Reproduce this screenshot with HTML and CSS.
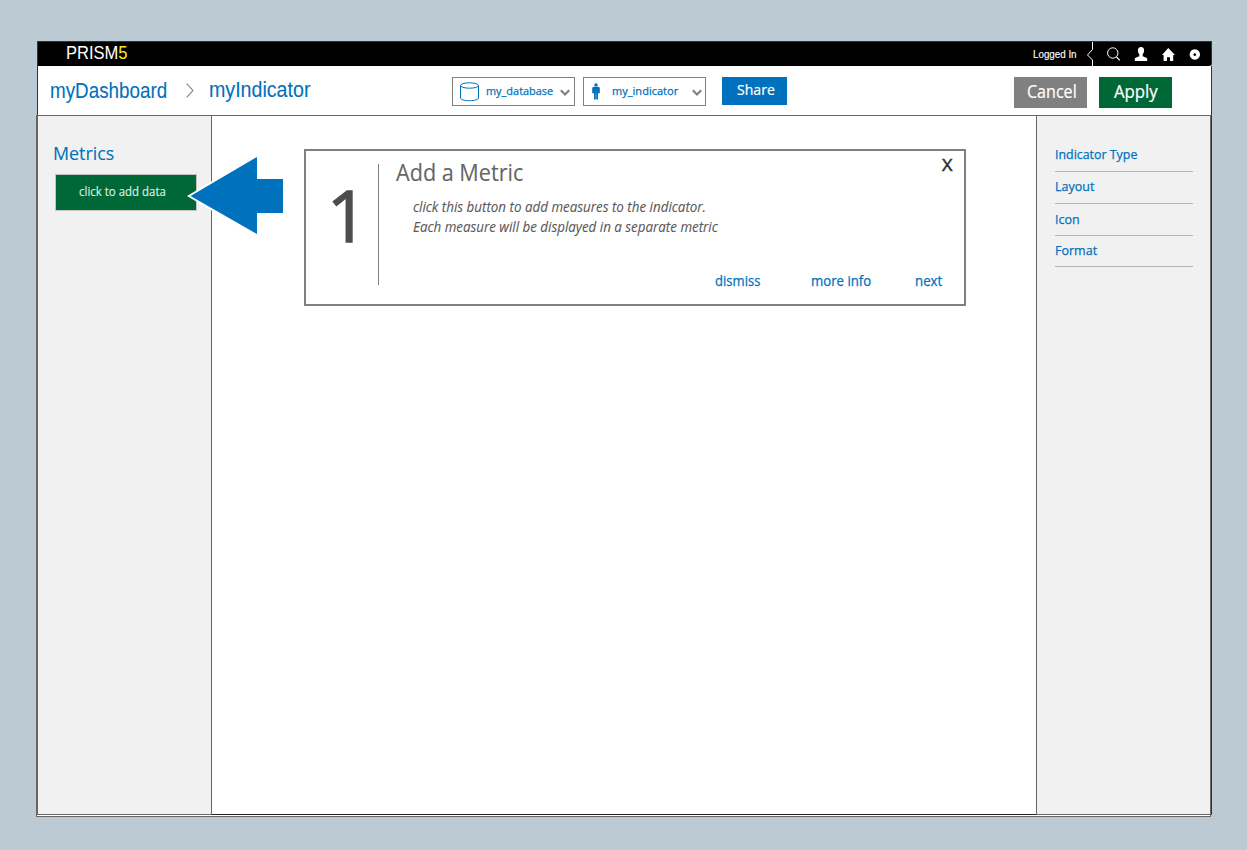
FILE: index.html
```html
<!DOCTYPE html>
<html lang="en">
<head>
<meta charset="utf-8">
<title>PRISM5</title>
<link rel="stylesheet" href="styles.css">
</head>
<body>
<div class="window">
  <div class="topbar">
    <div class="brand"><span class="fit">PRISM<b>5</b></span></div>
    <div class="tools">
      <span class="logged"><span class="fit">Logged In</span></span>
      <svg class="tool-icons" width="126" height="24" viewBox="1085 42 126 24">
        <path d="M1092.500 42v7.500l-5 5.500 5 5v6" fill="none" stroke="#fff"/>
        <circle cx="1112.800" cy="53" r="5.200" fill="none" stroke="#fff"/>
        <path d="M1116.500 57l3.300 3.300" stroke="#fff" stroke-width="1.200"/>
        <path d="M1141 47c2.100 0 3.200 1.500 3.100 3.400 0 1.700-.700 2.800-1.400 3.700v2.200l3.600 1.500c.700.300.900.800.900 1.500v1.700h-12.400v-1.700c0-.700.200-1.200.900-1.500l3.600-1.500v-2.200c-.700-.900-1.400-2-1.400-3.700 0-1.900 1-3.400 3.100-3.400z" fill="#fff"/>
        <path d="M1168.300 48l6.700 7h-1.800v6h-3.200v-3.800h-3v3.800h-3.400v-6h-1.600z" fill="#fff"/>
        <path d="M1194.800 49.300a5.200 5.200 0 1 0 .01 0zM1194.800 53.200a1.400 1.400 0 1 1-.01 0z" fill="#fff" fill-rule="evenodd"/>
      </svg>
    </div>
  </div>

  <div class="header">
    <div class="crumbs">
      <span class="crumb dash"><span class="fit">myDashboard</span></span>
      <svg class="chev" width="8" height="15" viewBox="0 0 8 15"><path d="M.7.700l6.200 6.800-6.200 6.800" fill="none" stroke="#808080" stroke-width="1.100"/></svg>
      <span class="crumb ind"><span class="fit">myIndicator</span></span>
    </div>
    <div class="picks">
      <div class="select db">
        <svg width="21" height="20" viewBox="0 0 21 20" fill="none" stroke="#0071bc"><ellipse cx="10.500" cy="3.500" rx="9" ry="2.700"/><path d="M1.500 3.500v12.500c0 1.500 4 2.700 9 2.700s9-1.200 9-2.700v-12.500"/></svg>
        <span class="value"><span class="fit">my_database</span></span>
        <svg class="arrow" width="10" height="8" viewBox="0 0 10 8"><path d="M.8 1.300l4.200 4.200 4.200-4.200" fill="none" stroke="#808080" stroke-width="2.200"/></svg>
      </div>
      <div class="select person">
        <svg width="10" height="18" viewBox="0 0 10 18" fill="#0071bc"><circle cx="5" cy="1.900" r="1.700"/><path d="M3 3.800h4c1.100 0 1.800.800 1.800 1.800v4.700h-1.800v6.200h-1.800v-6h-.4v6h-1.800v-6.200h-1.800v-4.700c0-1 .7-1.800 1.800-1.800z"/></svg>
        <span class="value"><span class="fit">my_indicator</span></span>
        <svg class="arrow" width="10" height="8" viewBox="0 0 10 8"><path d="M.8 1.300l4.200 4.200 4.200-4.200" fill="none" stroke="#808080" stroke-width="2.200"/></svg>
      </div>
      <div class="share"><span class="fit">Share</span></div>
    </div>
    <div class="actions">
      <div class="btn cancel"><span class="fit">Cancel</span></div>
      <div class="btn apply"><span class="fit">Apply</span></div>
    </div>
  </div>

  <div class="body">
    <div class="left">
      <div class="left-title"><span class="fit">Metrics</span></div>
      <div class="add"><span class="fit">click to add data</span></div>
      <svg class="pointer" width="102" height="84" viewBox="184 154 102 84"><path d="M257 154.500L187 196l70 41z" fill="#fff"/><path d="M190.500 196L257 157v22h26v34h-26v21z" fill="#0071bc"/></svg>
    </div>
    <div class="main">
      <div class="card">
        <div class="step"><span class="fit">1</span></div>
        <div class="content">
          <div class="card-head">
            <div class="card-title"><span class="fit">Add a Metric</span></div>
            <div class="close"><span class="fit">X</span></div>
          </div>
          <div class="copy">
            <div><span class="fit line-a">click this button to add measures to the indicator.</span></div>
            <div><span class="fit line-b">Each measure will be displayed in a separate metric</span></div>
          </div>
          <div class="links">
            <span class="link dismiss"><span class="fit">dismiss</span></span>
            <span class="link more"><span class="fit">more info</span></span>
            <span class="link next"><span class="fit">next</span></span>
          </div>
        </div>
      </div>
    </div>
    <div class="right">
      <div class="item type"><span class="fit">Indicator Type</span></div>
      <div class="item layout"><span class="fit">Layout</span></div>
      <div class="item icon"><span class="fit">Icon</span></div>
      <div class="item format"><span class="fit">Format</span></div>
    </div>
  </div>
  <div class="base"></div>
</div>
</body>
</html>
```

FILE: styles.css
```css
* { box-sizing: border-box; }
body {
  margin: 0;
  padding: 41px 35px 0 36px;
  height: 850px;
  overflow: hidden;
  background: #bccad3;
  color: #666;
  font-family: "Open Sans", "Noto Sans", sans-serif;
}
svg { display: block; flex: none; }
.window { width: 1176px; }
.fit {
  display: inline-block;
  white-space: nowrap;
  transform: scaleX(var(--sx, 1));
  transform-origin: 0 50%;
}

.topbar {
  height: 25px;
  margin-left: 1px;
  padding-left: 28px;
  display: flex;
  justify-content: space-between;
  background: #000;
  border: 1px solid #2d3538;
  border-bottom: 0;
  border-radius: 0 0 3px 0;
  box-shadow: 0 4px 0 -1px #fff;
}
.brand {
  --sx: .87;
  font: 19px/22px "Liberation Sans", Arial, sans-serif;
  color: #fff;
}
.brand b { font-weight: 400; color: #ffe81a; }
.tools { display: flex; }
.logged {
  --sx: .89;
  width: 52px;
  font: 11px/25px "Liberation Sans", Arial, sans-serif;
  color: #fff;
  -webkit-text-stroke: .15px;
}

.header {
  position: relative;
  height: 49px;
  margin-left: 1px;
  display: flex;
  align-items: flex-start;
  background: #fff;
  border: 1px solid #333;
  border-width: 0 1px;
}
.crumbs { display: flex; width: 414px; padding-left: 12px; }
.crumb {
  font: 21.700px/24px "Liberation Sans", Arial, sans-serif;
  color: #0071bc;
  -webkit-text-stroke: .1px;
}
.dash { --sx: .868; width: 136px; padding-top: 13px; }
.chev { margin-top: 17px; }
.ind { --sx: .905; padding: 12px 0 0 15px; }
.picks { display: flex; width: 562px; padding-top: 11px; }
.select {
  width: 123px;
  height: 29px;
  margin-right: 8px;
  display: flex;
  align-items: center;
  border: 1px solid #808080;
  color: #0071bc;
  font-size: 11.500px;
  -webkit-text-stroke: .25px;
}
.db { --sx: .95; padding-left: 6px; }
.person { --sx: .96; padding-left: 7px; }
.value { width: 75px; height: 27px; line-height: 26px; }
.db .value { margin-left: 6px; width: 74px; }
.person .value { margin-left: 11px; width: 80px; }
.arrow { margin-top: 3px; }
.share {
  --sx: .97;
  width: 65px;
  height: 28px;
  margin-left: 8px;
  padding-left: 15px;
  background: #0071bc;
  color: #fff;
  font-size: 14.500px;
  line-height: 25px;
  -webkit-text-stroke: .2px;
}
.actions { display: flex; gap: 12px; padding-top: 11px; }
.btn {
  width: 73px;
  height: 31px;
  color: #fff;
  font-size: 17.300px;
  line-height: 30px;
  -webkit-text-stroke: .2px;
}
.cancel { --sx: .93; background: #808080; padding-left: 13px; }
.apply { --sx: .97; background: #006837; padding-left: 14.500px; }

.body {
  height: 700px;
  display: grid;
  grid-template-columns: 176px 824px 176px;
}
.left {
  position: relative;
  background: #f1f1f1;
  border: 1px solid #666;
  border-left-width: 2px;
  padding: 25px 0 0 15px;
}
.left-title {
  --sx: .96;
  color: #0071bc;
  font-size: 18.600px;
  line-height: 24px;
  -webkit-text-stroke: .1px;
}
.add {
  --sx: .955;
  width: 142px;
  height: 37px;
  margin: 9px 0 0 2px;
  padding-left: 23px;
  border: 1px solid #c4c4c4;
  background: #006837;
  color: #dbeee3;
  font-size: 12px;
  line-height: 33px;
  -webkit-text-stroke: .15px;
}
.pointer { position: absolute; left: 146px; top: 38px; z-index: 2; }

.main {
  background: #fff;
  border-top: 1px solid #666;
  border-bottom: 1px solid #222;
  padding: 33px 0 0 92px;
}
.card {
  width: 662px;
  height: 157px;
  border: 2px solid #808080;
  display: flex;
  padding-top: 13px;
}
.step {
  width: 73px;
  height: 121px;
  padding-left: 21px;
  border-right: 1px solid #808080;
  color: #4d4d4d;
  font-size: 71px;
  line-height: 101px;
  -webkit-text-stroke: 1.500px;
}
.content { flex: 1; padding-left: 17px; }
.card-head { display: flex; justify-content: space-between; height: 33px; }
.card-title { --sx: .92; font-size: 23.500px; line-height: 16px; -webkit-text-stroke: .1px; }
.close {
  --sx: 1.1;
  width: 22px;
  margin-top: -9px;
  color: #333;
  font-size: 16.500px;
  line-height: 20px;
  -webkit-text-stroke: .5px;
}
.copy {
  height: 74px;
  padding-left: 17px;
  color: #595959;
  font-size: 14px;
  font-style: italic;
  line-height: 20px;
  -webkit-text-stroke: .1px;
}
.line-a { --sx: .955; }
.line-b { --sx: .954; }
.links {
  display: flex;
  padding-left: 319px;
  color: #0071bc;
  font-size: 13.700px;
  line-height: 20px;
  -webkit-text-stroke: .25px;
}
.dismiss { --sx: .955; width: 95.500px; }
.more { --sx: .965; width: 104.500px; }
.next { --sx: .97; }

.right {
  background: #f1f1f1;
  border: 1px solid #666;
  box-shadow: inset -1px 0 #666;
  border-right-color: #333;
  padding: 23px 18px 0 18px;
}
.item {
  height: 32px;
  border-bottom: 1px solid #b3b3b3;
  color: #0071bc;
  font-size: 13.200px;
  line-height: 30px;
  -webkit-text-stroke: .25px;
}
.type { --sx: .94; height: 33px; }
.layout { --sx: .95; line-height: 28px; }
.icon { --sx: .95; }
.format { --sx: .95; height: 31px; line-height: 28px; }
.base {
  width: 1175px;
  height: 2px;
  background: #fff;
  border: 1px solid #666;
  border-top: 0;
}
```
